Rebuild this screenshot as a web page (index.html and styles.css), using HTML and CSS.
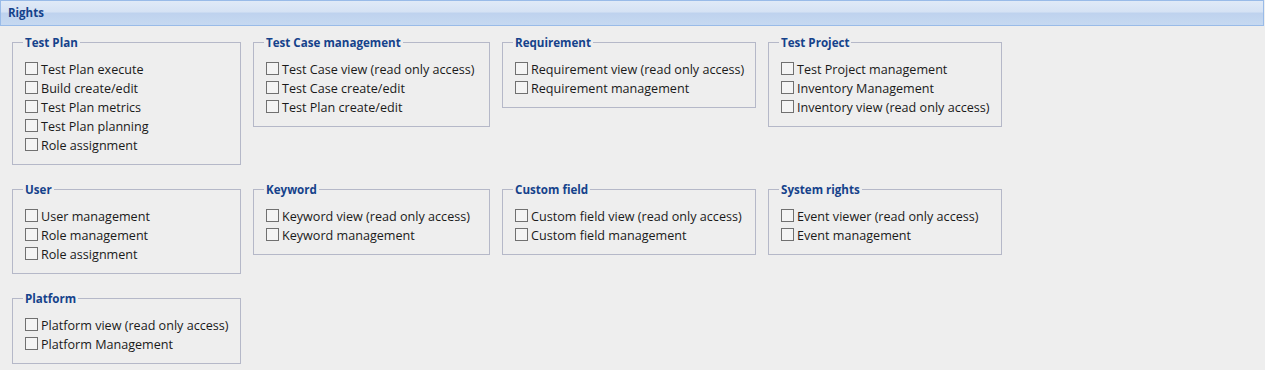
FILE: index.html
```html
<!DOCTYPE html>
<html lang="en">

<head>
    <meta charset="UTF-8">
    <title>Rights</title>
    <link rel="stylesheet" href="styles.css">
</head>

<body>

    <div class="panel-header">Rights</div>

    <div class="rights-grid">
        <fieldset>
            <legend>Test Plan</legend>
            <label><input type="checkbox">Test Plan execute</label>
            <label><input type="checkbox">Build create/edit</label>
            <label><input type="checkbox">Test Plan metrics</label>
            <label><input type="checkbox">Test Plan planning</label>
            <label><input type="checkbox">Role assignment</label>
        </fieldset>

        <fieldset>
            <legend>Test Case management</legend>
            <label><input type="checkbox">Test Case view (read only access)</label>
            <label><input type="checkbox">Test Case create/edit</label>
            <label><input type="checkbox">Test Plan create/edit</label>
        </fieldset>

        <fieldset>
            <legend>Requirement</legend>
            <label><input type="checkbox">Requirement view (read only access)</label>
            <label><input type="checkbox">Requirement management</label>
        </fieldset>

        <fieldset>
            <legend>Test Project</legend>
            <label><input type="checkbox">Test Project management</label>
            <label><input type="checkbox">Inventory Management</label>
            <label><input type="checkbox">Inventory view (read only access)</label>
        </fieldset>

        <fieldset>
            <legend>User</legend>
            <label><input type="checkbox">User management</label>
            <label><input type="checkbox">Role management</label>
            <label><input type="checkbox">Role assignment</label>
        </fieldset>

        <fieldset>
            <legend>Keyword</legend>
            <label><input type="checkbox">Keyword view (read only access)</label>
            <label><input type="checkbox">Keyword management</label>
        </fieldset>

        <fieldset>
            <legend>Custom field</legend>
            <label><input type="checkbox">Custom field view (read only access)</label>
            <label><input type="checkbox">Custom field management</label>
        </fieldset>

        <fieldset>
            <legend>System rights</legend>
            <label><input type="checkbox">Event viewer (read only access)</label>
            <label><input type="checkbox">Event management</label>
        </fieldset>

        <fieldset>
            <legend>Platform</legend>
            <label><input type="checkbox">Platform view (read only access)</label>
            <label><input type="checkbox">Platform Management</label>
        </fieldset>
    </div>

</body>

</html>
```

FILE: styles.css
```css
* {
    margin: 0;
    padding: 0;
    box-sizing: border-box;
}

body {
    font-family: 'Open Sans', sans-serif;
    background: #eeeeee;
    color: #1a1a1a;
    width: 1265px;
}

.panel-header {
    width: 1264px;
    height: 26px;
    border: 1px solid #99bbe8;
    background: linear-gradient(#e0eaf7 0, #d5e2f4 46%, #bed2ee 50%, #c6d9f1 100%);
    color: #15428b;
    font-size: 11.5px;
    font-weight: bold;
    line-height: 24px;
    padding-left: 7px;
}

.rights-grid {
    display: grid;
    grid-template-columns: 229px 237px 254px 234px;
    column-gap: 12px;
    row-gap: 18px;
    align-items: start;
    margin: 10px 0 0 12px;
}

fieldset {
    min-width: 0;
    border: 1px solid #b5b8c8;
    padding: 10px 6px 10px 12px;
}

legend {
    color: #15428b;
    font-size: 11.6px;
    font-weight: bold;
    line-height: 13px;
    padding: 0 2px;
    margin-left: -2px;
}

fieldset label {
    display: flex;
    align-items: center;
    height: 19px;
    padding-top: 1px;
    font-size: 12.6px;
    white-space: nowrap;
}

fieldset input {
    appearance: none;
    flex: none;
    width: 13px;
    height: 13px;
    border: 1px solid #707070;
    background: #f4f4f4;
    margin: -1px 3px 0 0;
}
```
